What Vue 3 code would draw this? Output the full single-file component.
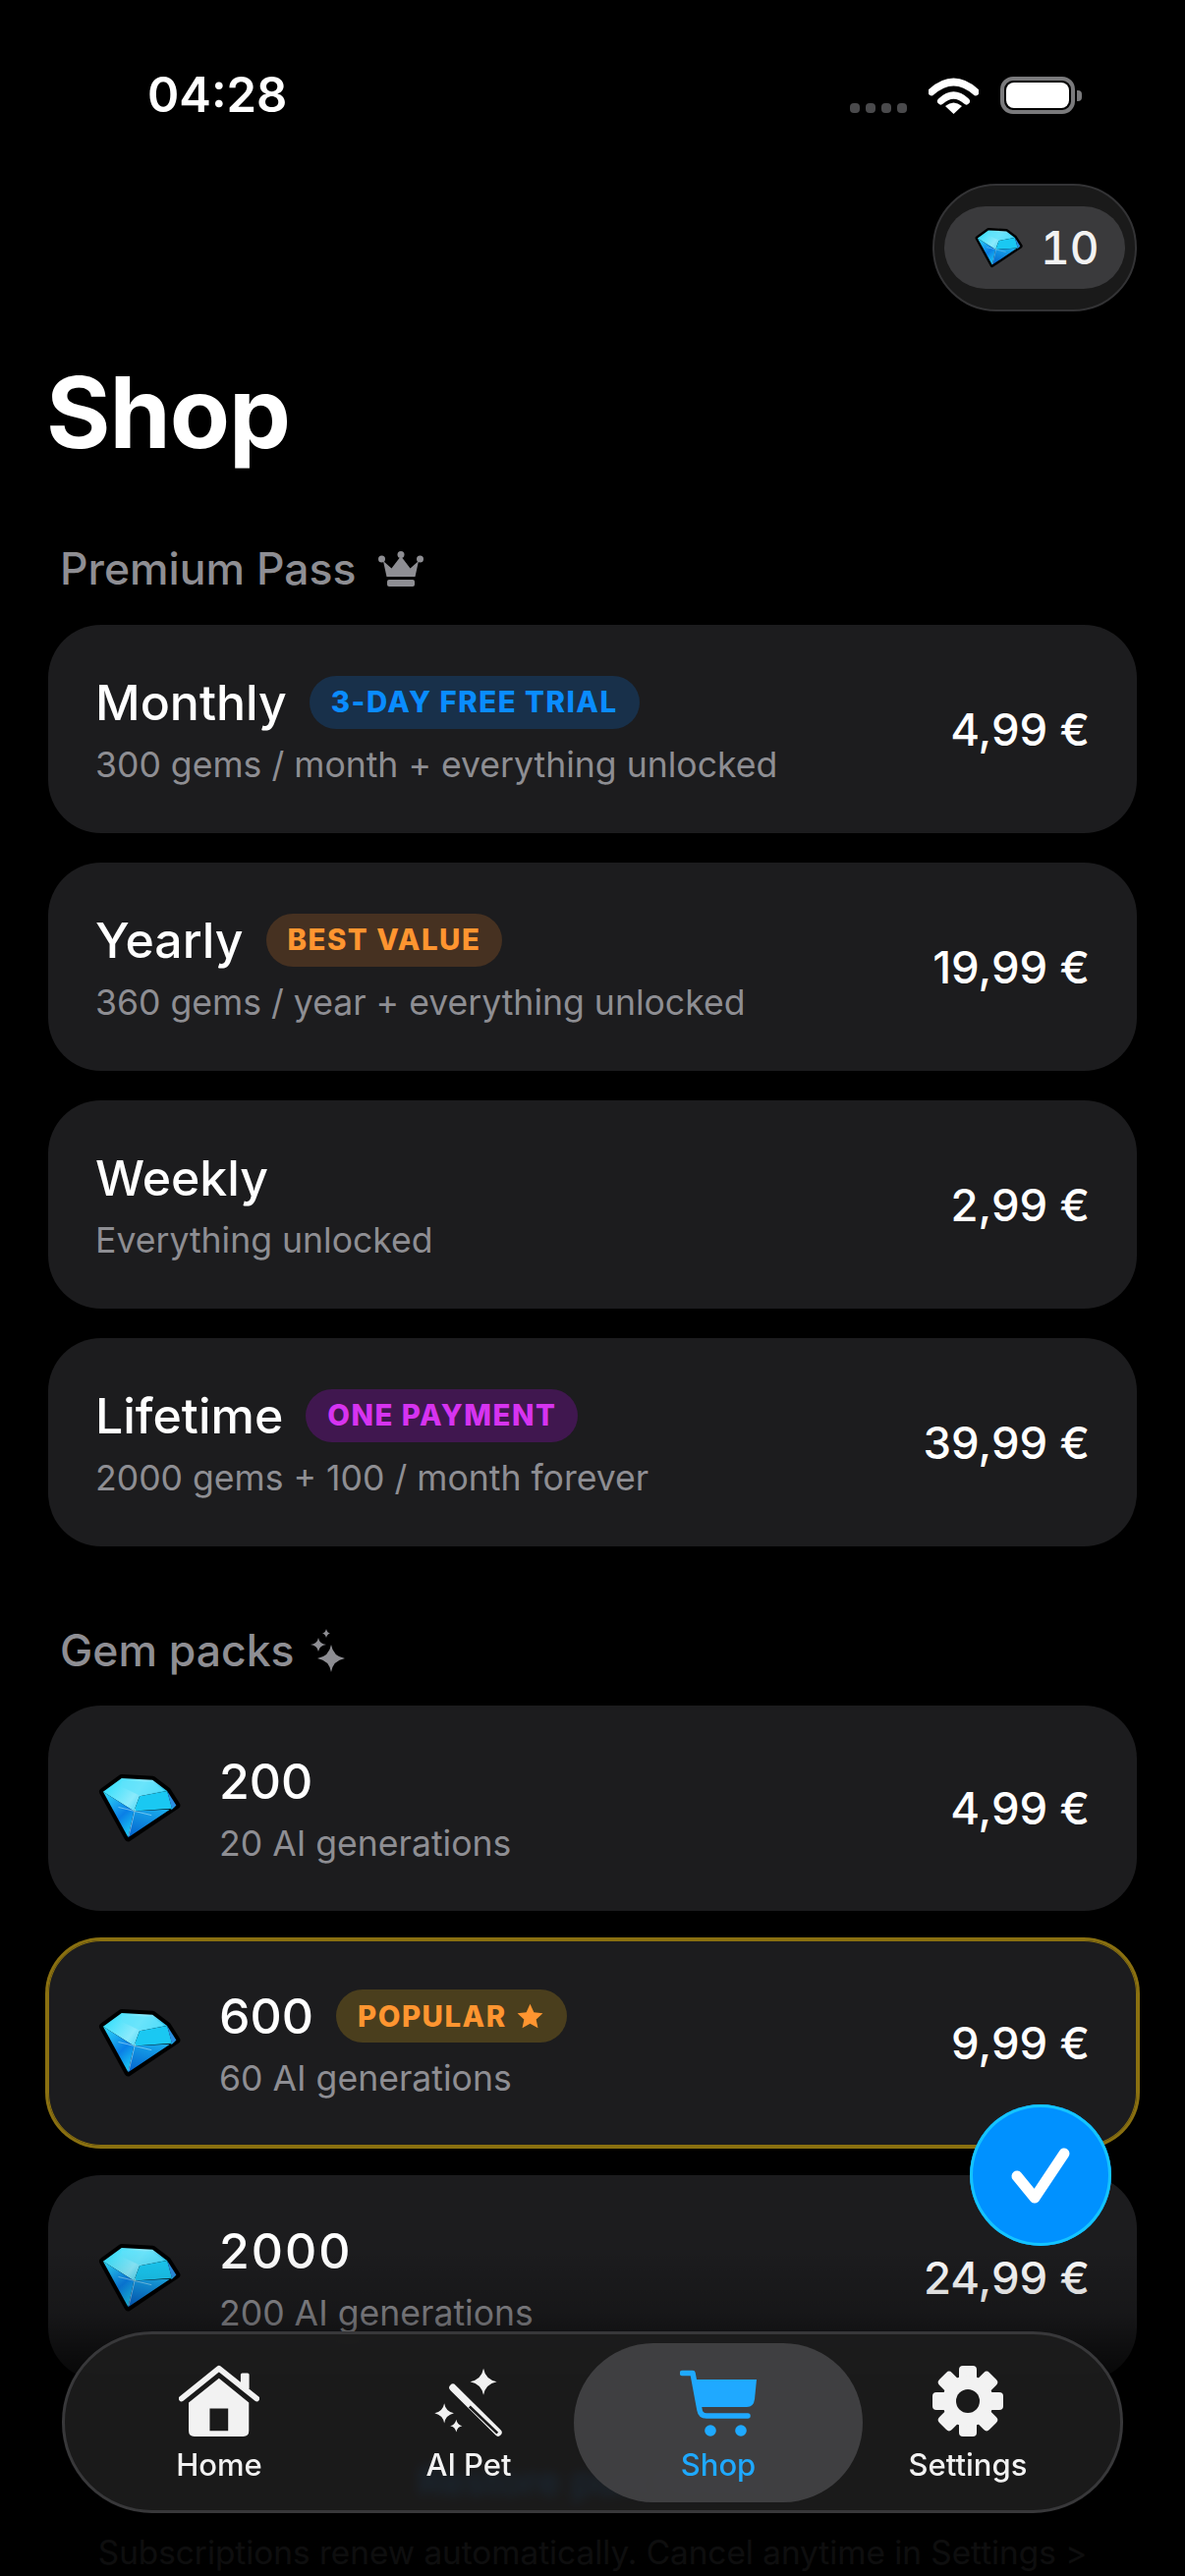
<template>
  <div class="screen">
    <svg class="defs" width="0" height="0">
      <defs>
        <linearGradient id="gemTop" x1="0" y1="0" x2="1" y2="0.4">
          <stop offset="0%" stop-color="#22dcfb" />
          <stop offset="60%" stop-color="#8beafc" />
          <stop offset="100%" stop-color="#1fc4ef" />
        </linearGradient>
        <linearGradient id="gemLeft" x1="0" y1="0" x2="0.6" y2="1">
          <stop offset="0%" stop-color="#2fdcfa" />
          <stop offset="65%" stop-color="#0a7fe6" />
          <stop offset="100%" stop-color="#18bdf2" />
        </linearGradient>
        <linearGradient id="gemLow" x1="0.6" y1="0" x2="0.2" y2="1">
          <stop offset="0%" stop-color="#1bb0ee" />
          <stop offset="100%" stop-color="#0466d0" />
        </linearGradient>
        <symbol id="gem" viewBox="118 20 254 205" preserveAspectRatio="none">
          <polygon points="133,72 190,32 285,37 330,70 358,112 210,208" fill="#000" stroke="#000" stroke-width="24" stroke-linejoin="round" />
          <polygon points="133,72 190,32 285,37 330,70 245,85 228,130" fill="url(#gemTop)" />
          <polygon points="190,40 280,42 322,68 245,83 192,58" fill="#5fe2fb" opacity="0.75" />
          <polygon points="133,72 228,130 210,208" fill="url(#gemLeft)" />
          <polygon points="245,85 330,70 345,122 228,130" fill="#1ac8f2" />
          <polygon points="330,70 358,112 345,124" fill="#2a8fe2" />
          <polygon points="228,130 345,124 358,112 210,208" fill="url(#gemLow)" />
          <path d="M232 122 L212 204 M180 118 L282 142" stroke="#d8f8ff" stroke-width="2" opacity="0.7" />
        </symbol>
      </defs>
    </svg>

    <div class="status-bar">
      <span class="clock">04:28</span>
      <div class="status-icons">
        <div class="signal"><i v-for="n in 4" :key="n"></i></div>
        <svg width="51" height="38" viewBox="0 0 51 38">
          <path d="M3 15.5 Q25.5 -4.5 48 15.5" fill="none" stroke="#fff" stroke-width="7.5" stroke-linecap="round" />
          <path d="M12.5 25 Q25.5 13 38.5 25" fill="none" stroke="#fff" stroke-width="7" stroke-linecap="round" />
          <path d="M17 30 Q25.5 23 34 30 L25.5 38 Z" fill="#fff" />
        </svg>
        <div class="battery"><div class="battery-fill"></div></div>
      </div>
    </div>

    <div class="balance-row">
      <div class="balance-outer">
        <div class="balance-inner">
          <svg class="balance-gem" width="49" height="41"><use href="#gem" /></svg>
          <span>10</span>
        </div>
      </div>
    </div>

    <h1 class="page-title">Shop</h1>

    <div class="section-head">
      <span>Premium Pass</span>
      <svg width="46" height="36" viewBox="0 0 46 36" fill="#8e8e93">
        <circle cx="23" cy="3.5" r="3.5" />
        <circle cx="3.5" cy="8" r="3.5" />
        <circle cx="42.5" cy="8" r="3.5" />
        <path d="M5 10 L13.5 17.5 L23 5 L32.5 17.5 L41 10 L37.5 26 H8.5 Z" />
        <rect x="9" y="29" width="28" height="7" rx="2" />
      </svg>
    </div>

    <div class="card-list plans">
      <div v-for="plan in plans" :key="plan.name" class="card">
        <div class="card-text">
          <div class="card-title">
            <span>{{ plan.name }}</span>
            <span v-if="plan.tag" class="tag" :class="plan.tagClass">{{ plan.tag }}</span>
          </div>
          <div class="card-sub">{{ plan.sub }}</div>
        </div>
        <div class="price">{{ plan.price }}</div>
      </div>
    </div>

    <div class="section-head gems-head">
      <span>Gem packs</span>
      <svg width="36" height="44" viewBox="0 0 36 44" fill="#8e8e93">
        <path d="M22 16 Q24 28 36 30 Q24 32 22 44 Q20 32 8 30 Q20 28 22 16 Z" />
        <path d="M9 9 Q10 15 17 16 Q10 17 9 23 Q8 17 1 16 Q8 15 9 9 Z" />
        <path d="M17 0 Q18 4 21 4.5 Q18 5 17 9 Q16 5 13 4.5 Q16 4 17 0 Z" />
      </svg>
    </div>

    <div class="card-list packs">
      <div v-for="pack in packs" :key="pack.amount" class="card pack" :class="{ selected: pack.selected }">
        <svg class="pack-gem" width="84" height="70"><use href="#gem" /></svg>
        <div class="card-text">
          <div class="card-title">
            <span :class="{ spaced: pack.amount === '2000' }">{{ pack.amount }}</span>
            <span v-if="pack.selected" class="tag tag-popular">
              POPULAR
              <svg width="31" height="29" viewBox="0 0 24 24" fill="#ff9530"><path d="M12 1.5l3.2 6.9 7.5.9-5.6 5.1 1.5 7.4L12 18.1l-6.6 3.7 1.5-7.4L1.3 9.3l7.5-.9z" /></svg>
            </span>
          </div>
          <div class="card-sub">{{ pack.sub }}</div>
        </div>
        <div class="price">{{ pack.price }}</div>
      </div>
    </div>

    <div class="restore">Restore purchases</div>
    <div class="legal">Subscriptions renew automatically. Cancel anytime in Settings &gt;</div>

    <div class="bottom-fade"></div>

    <div class="confirm-btn">
      <svg width="144" height="144" viewBox="0 0 144 144">
        <path d="M48 73 L66 95 L96 50" fill="none" stroke="#fff" stroke-width="11" stroke-linecap="round" stroke-linejoin="round" />
      </svg>
    </div>

    <nav class="tab-bar">
      <div class="tab">
        <svg width="82" height="73" viewBox="390 115 245 218">
          <rect x="578" y="140" width="26" height="50" rx="5" fill="#f2f2f2" />
          <path d="M398 218 L512 126 L627 218" fill="none" stroke="#f2f2f2" stroke-width="17" stroke-linecap="round" stroke-linejoin="round" />
          <path fill-rule="evenodd" d="M512 156 L603 230 V316 Q603 333 586 333 H437 Q420 333 420 316 V230 Z M484 248 V316 H540 V248 Z" fill="#f2f2f2" />
        </svg>
        <span>Home</span>
      </div>
      <div class="tab">
        <svg width="70" height="70" viewBox="1175 115 205 207">
          <path d="M1322 117 Q1328 150 1362 157 Q1328 164 1322 197 Q1316 164 1282 157 Q1316 150 1322 117 Z" fill="#f2f2f2" />
          <path d="M1204 222 Q1208 246 1233 252 Q1208 258 1204 282 Q1200 258 1175 252 Q1200 246 1204 222 Z" fill="#f2f2f2" />
          <path d="M1240 271 Q1243 287 1258 290 Q1243 293 1240 309 Q1237 293 1222 290 Q1237 287 1240 271 Z" fill="#f2f2f2" />
          <path d="M1230 175 L1366 310" stroke="#f2f2f2" stroke-width="22" stroke-linecap="round" />
          <path d="M1280 232 L1364 312" stroke="#1a1a1a" stroke-width="8" stroke-linecap="butt" />
        </svg>
        <span>AI Pet</span>
      </div>
      <div class="tab active">
        <svg width="78" height="68" viewBox="0 0 78 68">
          <path d="M2.5 3.5 H13 L20 41 Q21 47 27 47 H69" fill="none" stroke="#1fa9ff" stroke-width="5.5" stroke-linecap="round" stroke-linejoin="round" />
          <path d="M15 10 H78 L76 30 Q75 38 68 38 H20 Z" fill="#1fa9ff" />
          <circle cx="31" cy="62" r="5.8" fill="#1fa9ff" />
          <circle cx="62" cy="62" r="5.8" fill="#1fa9ff" />
        </svg>
        <span>Shop</span>
      </div>
      <div class="tab">
        <svg width="72" height="72" viewBox="0 0 72 72">
          <rect v-for="angle in gearTeeth" :key="angle" x="27" y="0" width="18" height="20" rx="4" fill="#f2f2f2" :transform="`rotate(${angle} 36 36)`" />
          <circle cx="36" cy="36" r="26" fill="#f2f2f2" />
          <circle cx="36" cy="36" r="12" fill="#1a1a1a" />
        </svg>
        <span>Settings</span>
      </div>
    </nav>
  </div>
</template>

<script setup>
const plans = [
  { name: 'Monthly', tag: '3-DAY FREE TRIAL', tagClass: 'tag-trial', sub: '300 gems / month + everything unlocked', price: '4,99 €' },
  { name: 'Yearly', tag: 'BEST VALUE', tagClass: 'tag-best', sub: '360 gems / year + everything unlocked', price: '19,99 €' },
  { name: 'Weekly', sub: 'Everything unlocked', price: '2,99 €' },
  { name: 'Lifetime', tag: 'ONE PAYMENT', tagClass: 'tag-once', sub: '2000 gems + 100 / month forever', price: '39,99 €' }
]

const packs = [
  { amount: '200', sub: '20 AI generations', price: '4,99 €' },
  { amount: '600', sub: '60 AI generations', price: '9,99 €', selected: true },
  { amount: '2000', sub: '200 AI generations', price: '24,99 €' }
]

const gearTeeth = [0, 45, 90, 135, 180, 225, 270, 315]
</script>

<style>
body {
  background: #000;
}
</style>

<style scoped>
.screen {
  position: relative;
  width: 1206px;
  height: 2622px;
  overflow: hidden;
  background: #000;
  color: #fff;
  font-family: Inter, "Noto Sans", sans-serif;
  box-sizing: border-box;
  padding: 0 49px;
}

.defs {
  position: absolute;
}

.status-bar {
  display: flex;
  align-items: center;
  justify-content: space-between;
  padding: 72px 0 0 101px;
  height: 50px;
}

.clock {
  font-size: 49px;
  font-weight: 600;
  line-height: 50px;
}

.status-icons {
  display: flex;
  align-items: flex-end;
}

.signal {
  display: flex;
  gap: 6px;
  margin-right: 22px;
  margin-bottom: 1px;
}

.signal i {
  width: 10px;
  height: 10px;
  border-radius: 4px;
  background: #4a4a4c;
}

.battery {
  position: relative;
  width: 76px;
  height: 38px;
  margin-left: 22px;
  margin-right: 63px;
  box-sizing: border-box;
  border: 4px solid #7a7a7c;
  border-radius: 13px;
  padding: 2px;
}

.battery::after {
  content: "";
  position: absolute;
  right: -11px;
  top: 10px;
  width: 5px;
  height: 11px;
  background: #7a7a7c;
  border-radius: 0 4px 4px 0;
}

.battery-fill {
  height: 100%;
  background: #fff;
  border-radius: 8px;
}

.balance-row {
  display: flex;
  justify-content: flex-end;
  margin-top: 65px;
}

.balance-outer {
  box-sizing: border-box;
  width: 208px;
  height: 130px;
  padding: 21px 10px;
  background: #1a1a1a;
  border: 2px solid #333335;
  border-radius: 65px;
}

.balance-inner {
  display: flex;
  align-items: center;
  gap: 18px;
  height: 84px;
  padding-left: 31px;
  background: #3a3a3c;
  border-radius: 42px;
  font-size: 46px;
  font-weight: 500;
  color: #f2f2f2;
  font-variant-numeric: tabular-nums;
}

.balance-gem {
  flex: none;
}

.page-title {
  margin: 38px 0 0 -2px;
  font-size: 100px;
  line-height: 130px;
  font-weight: 700;
  letter-spacing: -1px;
}

.section-head {
  display: flex;
  align-items: center;
  gap: 22px;
  margin-top: 66px;
  padding-left: 12px;
  height: 56px;
  font-size: 44.5px;
  font-weight: 500;
  color: #8e8e93;
}

.card-list {
  display: flex;
  flex-direction: column;
}

.plans {
  gap: 30px;
  margin-top: 29px;
}

.plans .card {
  height: 212px;
}

.gems-head {
  margin-top: 78px;
  gap: 15px;
}

.packs {
  gap: 30px;
  margin-top: 28px;
}

.card {
  display: flex;
  align-items: center;
  box-sizing: border-box;
  height: 209px;
  padding: 0 48px;
  background: #1c1c1e;
  border-radius: 54px;
}

.card.selected {
  box-shadow: 0 0 0 3px #8a7010, inset 0 0 0 1px #8a7010;
}

.pack-gem {
  flex: none;
  margin-right: 39px;
  margin-left: 3px;
}

.card-text {
  flex: 1;
  min-width: 0;
  padding-top: 3px;
}

.card-title {
  display: flex;
  align-items: center;
  gap: 23px;
  height: 58px;
  font-size: 50px;
  font-weight: 500;
}

.spaced {
  letter-spacing: 2px;
}

.card-sub {
  margin-top: 12px;
  font-size: 35.6px;
  line-height: 46px;
  color: #8e8e93;
}

.price {
  font-size: 45.5px;
  font-weight: 500;
  color: #fff;
}

.tag {
  display: inline-flex;
  align-items: center;
  gap: 8px;
  height: 54px;
  padding: 0 22px;
  border-radius: 27px;
  font-size: 29.4px;
  font-weight: 800;
  letter-spacing: 1.5px;
}

.tag-trial {
  background: #18304a;
  color: #0a8cff;
}

.tag-best {
  background: #463121;
  color: #ff9530;
}

.tag-once {
  background: #40174f;
  color: #d633f0;
}

.tag-popular {
  background: #4a3e1d;
  color: #ff9530;
}

.restore {
  position: relative;
  z-index: 1;
  margin-top: 78px;
  text-align: center;
  font-size: 40px;
  line-height: 50px;
  font-weight: 500;
  color: #0a6fd6;
}

.legal {
  margin-top: 24px;
  text-align: center;
  font-size: 33.3px;
  line-height: 46px;
  color: #8e8e93;
  white-space: nowrap;
}

.bottom-fade {
  position: absolute;
  left: 0;
  right: 0;
  top: 2290px;
  bottom: 0;
  background: linear-gradient(180deg, rgba(0, 0, 0, 0) 0, rgba(0, 0, 0, 0.2) 65px, rgba(0, 0, 0, 0.75) 130px, rgba(0, 0, 0, 0.9) 210px);
}

.confirm-btn {
  position: absolute;
  z-index: 2;
  left: 987px;
  top: 2142px;
  box-sizing: border-box;
  width: 144px;
  height: 144px;
  background: #0091ff;
  border-radius: 50%;
  box-shadow: inset 0 0 0 3px #14c4ff;
}

.tab-bar {
  position: absolute;
  z-index: 2;
  left: 63px;
  top: 2373px;
  box-sizing: border-box;
  width: 1080px;
  height: 185px;
  padding: 0 30px;
  display: grid;
  grid-template-columns: repeat(4, 254px);
  background: rgba(30, 30, 30, 0.87);
  backdrop-filter: blur(6px);
  border: 3px solid #38383a;
  border-radius: 92px;
}

.tab {
  position: relative;
  display: flex;
  flex-direction: column;
  align-items: center;
  justify-content: flex-end;
  padding-bottom: 28px;
  gap: 10px;
  font-size: 31px;
  font-weight: 500;
  color: #f2f2f2;
}

.tab svg,
.tab span {
  position: relative;
}

.tab.active {
  color: #1fa9ff;
}

.tab.active::before {
  content: "";
  position: absolute;
  left: -20px;
  right: -20px;
  top: 9px;
  bottom: 8px;
  background: rgba(68, 68, 70, 0.9);
  border-radius: 82px;
}
</style>
